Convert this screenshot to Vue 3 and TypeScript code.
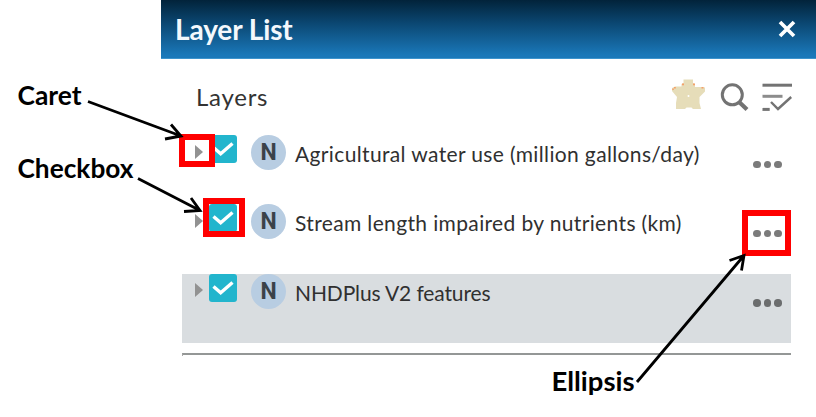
<script setup lang="ts">
interface Layer {
  id: number
  name: string
  selected: boolean
  spacing: string
}

const layers: Layer[] = [
  { id: 1, name: 'Agricultural water use (million gallons/day)', selected: false, spacing: 'wide' },
  { id: 2, name: 'Stream length impaired by nutrients (km)', selected: false, spacing: 'wide' },
  { id: 3, name: 'NHDPlus V2 features', selected: true, spacing: 'tight' },
]
</script>

<template>
  <main class="page">
    <section class="panel">
      <header class="titlebar">
        <h1>Layer List</h1>
        <svg class="close" viewBox="0 0 18 18"><path d="M2 2 16 16M16 2 2 16" /></svg>
      </header>
      <div class="toolbar">
        <h2>Layers</h2>
        <svg class="tools" viewBox="0 0 124 36">
          <path class="star" d="M11.5 3.5h9.5v3.500l2 1v3h7l3 .5v4l-5.500 5.500v6l1.500 6h-8l-1.500-1.500h-5l-1.500 1.500H4v-6l1-6-5-6v-3l3-1.500h6.500V8l2-1z" />
          <path class="corners" d="M10 7.500h2v1.800h-2zM21 7.500h2v1.800h-2zM29.500 11h2v1.500h-2zM2 11h1.800v1.500H2zM.3 12.500h1.500v1.500H.3z" />
          <circle cx="16.500" cy="20" r="1" fill="#fff" />
          <g class="glyph">
            <circle cx="60.300" cy="18.800" r="10" />
            <path d="m67.400 26.200 7.600 7.200" stroke-width="4.2" />
            <path d="M90.500 9.200H120" />
            <path class="light" d="M90.500 20.300h20" />
            <path d="M90.500 33.400h7.200" />
            <path d="m99 26 7 7 13.200-12" stroke-width="2.4" />
          </g>
        </svg>
      </div>
      <ul class="layers">
        <li v-for="layer in layers" :key="layer.id" :class="['row', { selected: layer.selected }]">
          <svg class="caret" viewBox="0 0 8 14"><path d="M0 0 8 7 0 14z" /></svg>
          <span class="check">
            <svg viewBox="0 0 28 28"><path d="m4.500 12.500 7.200 6.200L23.500 8.500" /></svg>
          </span>
          <span class="badge">N</span>
          <span :class="['name', layer.spacing]">{{ layer.name }}</span>
          <span class="more"><i></i><i></i><i></i></span>
        </li>
      </ul>
      <div class="rule"></div>
    </section>

    <svg class="notes" viewBox="0 0 816 417">
      <g class="boxes">
        <rect x="182" y="137" width="30" height="27" />
        <rect x="206" y="201" width="36" height="33" />
        <rect x="745" y="213" width="43" height="40" />
      </g>
      <g class="arrows">
        <path d="M88 101.5 181 136M171 124.5 181 136 165 139" />
        <path d="M138 178.5 200 210.5M191 198 200 210.5 184 211.5" />
        <path d="M637 382 744 255.5M729.5 260.5 744 255.5 741.5 270.5" />
      </g>
      <g class="labels">
        <text x="17.5" y="105" textLength="64" lengthAdjust="spacingAndGlyphs">Caret</text>
        <text x="17.5" y="178" textLength="116" lengthAdjust="spacingAndGlyphs">Checkbox</text>
        <text x="551.5" y="391" textLength="83" lengthAdjust="spacingAndGlyphs">Ellipsis</text>
      </g>
    </svg>
  </main>
</template>

<style>
body {
  margin: 0;
  background: #fff;
}
</style>

<style scoped>
.page {
  position: relative;
  width: 816px;
  height: 417px;
  overflow: hidden;
  background: #fff;
  font-family: Lato, 'Liberation Sans', sans-serif;
}
.panel {
  margin-left: 161px;
}
.titlebar {
  box-sizing: border-box;
  height: 59px;
  padding: 0 20px 0 14px;
  display: flex;
  align-items: center;
  justify-content: space-between;
  background: linear-gradient(#02233a, #0b4772 40%, #1a78b9 95%);
  border-bottom: 1px solid #3d94cd;
}
h1 {
  margin: 0;
  color: #f4f8fc;
  font-size: 28px;
  font-weight: 700;
  line-height: 58px;
  letter-spacing: -0.1px;
}
.close {
  width: 18px;
  height: 18px;
  fill: none;
  stroke: #fff;
  stroke-width: 3.7;
}
.toolbar {
  height: 76px;
  padding: 0 20px 0 35px;
  display: flex;
  justify-content: space-between;
}
h2 {
  margin: 0;
  color: #333;
  font-size: 24px;
  font-weight: 400;
  line-height: 76px;
  letter-spacing: 0.75px;
}
.tools {
  width: 124px;
  height: 36px;
  margin-top: 17px;
}
.star {
  fill: #e6ddb9;
}
.corners {
  fill: #f5a06a;
}
.glyph {
  fill: none;
  stroke: #737373;
  stroke-width: 3;
}
.glyph .light {
  stroke: #8c8c8c;
}
.layers {
  margin: 0 25px 0 21px;
  padding: 0;
  list-style: none;
}
.row {
  height: 69.4px;
  padding-left: 13px;
  display: flex;
  align-items: flex-start;
}
.row.selected {
  background: #d9dde0;
}
.caret {
  width: 8px;
  height: 14px;
  margin: 9.5px 6px 0 0;
  fill: #929292;
}
.check {
  width: 28px;
  height: 28px;
  margin-right: 14px;
  border-radius: 3px;
  background: #22b5cd;
}
.check svg {
  display: block;
  fill: none;
  stroke: #fff;
  stroke-width: 3.4;
}
.badge {
  width: 35px;
  height: 35px;
  margin-right: 9px;
  border-radius: 50%;
  background: #b8cde2;
  color: #3b4249;
  font: 700 23px/35px Roboto, sans-serif;
  text-align: center;
}
.name {
  flex: 1;
  color: #303030;
  font-size: 21px;
  line-height: 37px;
  white-space: nowrap;
}
.name.wide {
  letter-spacing: 0.36px;
}
.name.tight {
  letter-spacing: -0.12px;
}
.more {
  display: flex;
  gap: 3px;
  margin: 25.5px 9.5px 0 0;
}
.more i {
  width: 7.5px;
  height: 7.5px;
  border-radius: 50%;
  background: #7b7b7b;
}
.selected .more i {
  background: #6b6d6e;
}
.rule {
  height: 1px;
  margin: 10px 25px 0 21px;
  border-top: 2px solid #949796;
  border-left: 1px solid #aaa;
}
.notes {
  position: absolute;
  inset: 0;
  width: 816px;
  height: 417px;
}
.boxes {
  fill: none;
  stroke: #f00;
  stroke-width: 6;
}
.arrows {
  fill: none;
  stroke: #000;
  stroke-width: 2.8;
}
.labels {
  font-size: 26px;
  font-weight: 700;
  fill: #000;
}
</style>
